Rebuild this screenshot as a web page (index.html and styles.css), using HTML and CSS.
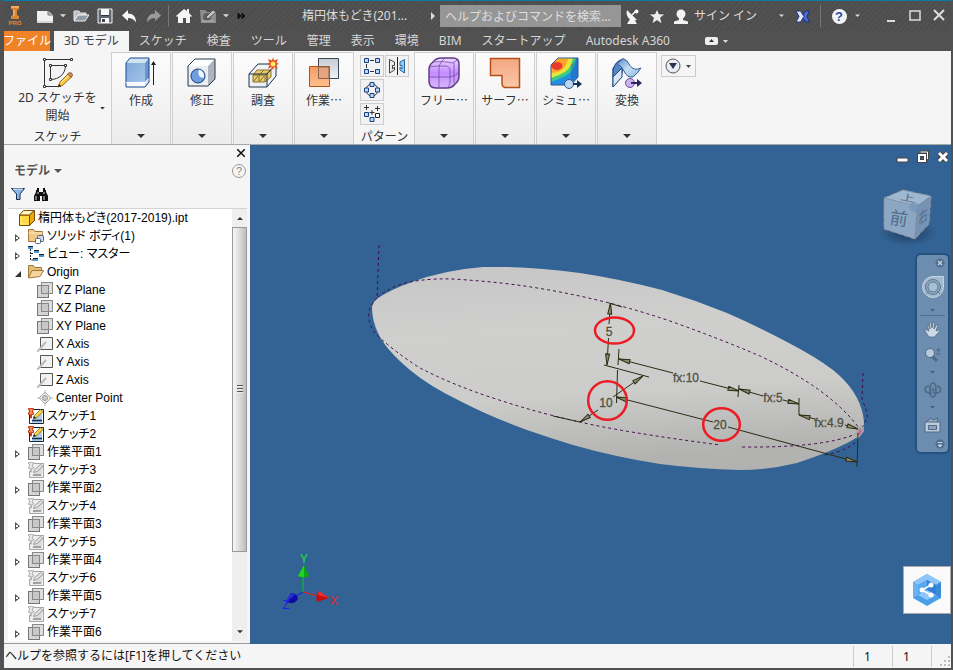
FILE: index.html
```html
<!DOCTYPE html>
<html lang="ja">
<head>
<meta charset="utf-8">
<title>楕円体もどき(2017-2019).ipt</title>
<link rel="stylesheet" href="styles.css">
</head>
<body>
<svg class="defs" aria-hidden="true">
  <defs>
    <linearGradient id="gBlue" x1="0" y1="0" x2="1" y2="1"><stop offset="0" stop-color="#7fa8d8"/><stop offset="1" stop-color="#a9c8ec"/></linearGradient>
    <linearGradient id="gGrey" x1="0" y1="0" x2="0" y2="1"><stop offset="0" stop-color="#c4cad2"/><stop offset="1" stop-color="#f2f4f6"/></linearGradient>
    <linearGradient id="gOrange" x1="0" y1="0" x2="0" y2="1"><stop offset="0" stop-color="#f79a62"/><stop offset="1" stop-color="#ffc08c"/></linearGradient>
    <linearGradient id="gSurface" x1="0" y1="0" x2="0" y2="1"><stop offset="0" stop-color="#f3a780"/><stop offset="1" stop-color="#f9c8a8"/></linearGradient>
    <linearGradient id="gPurple" x1="0" y1="0" x2="0" y2="1"><stop offset="0" stop-color="#ecd8ff"/><stop offset=".5" stop-color="#c48cff"/><stop offset="1" stop-color="#d9b6fb"/></linearGradient>
    <linearGradient id="gRibbon" x1="0" y1="0" x2="1" y2="1"><stop offset="0" stop-color="#5b8bc6"/><stop offset=".5" stop-color="#c5dcf4"/><stop offset="1" stop-color="#8db6e2"/></linearGradient>
    <linearGradient id="gBody" x1="0" y1="0" x2=".16" y2="1"><stop offset="0" stop-color="#c6c6c6"/><stop offset=".35" stop-color="#cfcfce"/><stop offset=".68" stop-color="#cccccb"/><stop offset="1" stop-color="#b2b2b1"/></linearGradient>
    <radialGradient id="gShadow"><stop offset=".4" stop-color="#1e3d60" stop-opacity=".6"/><stop offset="1" stop-color="#1e3d60" stop-opacity="0"/></radialGradient>
  </defs>
  <symbol id="caret" viewBox="0 0 8 5"><path d="M0 0h8L4 4z" fill="currentColor"/></symbol>
  <symbol id="plane" viewBox="0 0 16 16"><rect x="4.500" y=".5" width="11" height="11" fill="#ddd" stroke="#888"/><rect x=".5" y="3.500" width="11" height="12" fill="#d4d4d4" stroke="#777"/><rect x="4.500" y="3.500" width="7" height="8" fill="#c8c8c8" stroke="#888"/></symbol>
  <symbol id="axis" viewBox="0 0 16 16"><path d="M3.500 1.500h12v12h-12z" fill="#f1f1f1" stroke="#555"/><path d="M0 16 9 6" stroke="#bbb" stroke-width="2"/></symbol>
  <symbol id="point" viewBox="0 0 16 16"><path d="M8 2l6 6-6 6-6-6z" fill="#eee" stroke="#aaa"/><circle cx="8" cy="8" r="2.500" fill="#ccc" stroke="#999"/><path d="M8 0v4M8 12v4M0 8h4M12 8h4" stroke="#bbb"/></symbol>
  <symbol id="sk" viewBox="0 0 16 16"><path d="M1.500 1.500h14v14h-14z" fill="#fff" stroke="#15233a"/><path d="M4 12l10-10v13H4z" fill="#acd0f2"/><path d="M4 12.500h10" stroke="#142a4a" stroke-width="1.500"/><path d="M5.500 10.500l1-3 6-6 2.500 2-6 6z" fill="#ffd23b" stroke="#755a10" stroke-width=".7"/><path d="M5 11l1-3 2 2z" fill="#222"/><path d="M.5 .5h5v1.500h-1v2.500h1v2H3.500V10h-1V6.500h-2v-2h1V2h-1z" fill="#f08a5c" stroke="#c93c14"/></symbol>
  <symbol id="skoff" viewBox="0 0 16 16"><path d="M5 1.500h10.500v14h-14V9" fill="#eee" stroke="#a5a5a5"/><path d="M4 14l10-10v10z" fill="#ddd"/><path d="M5.500 10.500l1-3 6-5 2.500 2-6 5z" fill="#ddd" stroke="#a0a0a0"/><path d="M5 13h8" stroke="#a0a0a0" stroke-width="2"/><path d="M.5.5h5v1.500h-1v3h1v1.500H3.500V10h-1V6.500h-2V5h1V2h-1z" fill="#e7e7e7" stroke="#aaa" stroke-width=".8"/></symbol>
  <symbol id="part" viewBox="0 0 16 16"><path d="M.5 5h10v10.500H.5z" fill="#ffd93c" stroke="#7b4a00"/><path d="M.5 5l4-4.500h11L10.500 5z" fill="#fff6c2" stroke="#7b4a00"/><path d="M10.500 5l5-4.500v10l-5 5z" fill="#e9a90e" stroke="#7b4a00"/><path d="M2 6.500v7.500h7" stroke="#fff2a0" fill="none"/></symbol>
  <symbol id="bodies" viewBox="0 0 16 16"><path d="M.5 13.500v-12h5l1.500 2h7.500v10z" fill="#efc987" stroke="#a27838"/><path d="M.5 5h14" stroke="#fbe7be"/><rect x="9.500" y="7.500" width="6" height="6" rx="1" fill="#cfdaeb" stroke="#51627e"/><rect x="7.500" y="10.500" width="5" height="5" rx="1" fill="#fff" stroke="#51627e"/></symbol>
  <symbol id="view" viewBox="0 0 16 16"><path d="M2.500 3v11h3M3 7.500h3M11 9.500h5" stroke="#222" fill="none" stroke-dasharray="2 1"/><path d="M0 0h5v3H0zM6 4h5v3H6zM11 8h5v3h-5zM5 12h5v3H5z" fill="#4d97d8"/><path d="M0 0h5v1H0zM6 4h5v1H6zM11 8h5v1h-5zM5 12h5v1H5z" fill="#123"/></symbol>
  <symbol id="folder" viewBox="0 0 16 16"><path d="M.5 13.500v-12h5l1.500 2h6.500v3" fill="#e5bd7a" stroke="#a27838"/><path d="M.5 14 4 6.500h11.500l-3.500 6z" fill="#f5d79d" stroke="#a27838"/></symbol>
</svg>

<div class="window">
  <header class="titlebar">
    <button class="tool logo" aria-label="Inventor"><svg width="14" height="20" viewBox="0 0 14 20"><path d="M3 0h8v3L9 4v5l2 1v3H3v-3l2-1V4L3 3z" fill="#d88534"/><path d="M3 0h8v2H3zM5 4h2v6H5z" fill="#f5a860"/><text x="7" y="19" text-anchor="middle" class="pro">PRO</text></svg></button>
    <button class="tool" aria-label="新規"><svg width="16" height="13" viewBox="0 0 16 13"><path d="M0 1h11l5 4v8H0z" fill="#f0f1f2"/><path d="M11 1v4h5" fill="#b5bac0" stroke="#777"/><path d="M0 12h16" stroke="#bbb"/></svg></button>
    <button class="tool drop" aria-label="新規のオプション"><svg width="6" height="4"><use href="#caret"/></svg></button>
    <button class="tool" aria-label="開く"><svg width="16" height="13" viewBox="0 0 16 13"><path d="M1 10V1h5l1 2h6v2H5z" fill="#b9c0c7" stroke="#e6e6e6"/><path d="M1 11 5 5h11l-4 6z" fill="#8f9aa4" stroke="#f1f1f1"/></svg></button>
    <button class="tool" aria-label="保存"><svg width="16" height="16" viewBox="0 0 16 16"><path d="M1 1h14v14H1z" fill="#5d6873" stroke="#f4f4f4"/><path d="M4 1h8v6H4zM4 10h8v5H4z" fill="#f7f7f7"/><path d="M4 7.500h8" stroke="#334"/><path d="M5 11h3v3H5z" fill="#445"/></svg></button>
    <button class="tool" aria-label="元に戻す"><svg width="15" height="13" viewBox="0 0 15 13"><path d="M0 5.500 6 0v3.500c5 0 8 3 8 9-2-3-4-4.500-8-4.500v3z" fill="#f5f5f5"/></svg></button>
    <button class="tool" aria-label="やり直し"><svg width="15" height="13" viewBox="0 0 15 13"><path d="M15 5.500 9 0v3.500c-5 0-8 3-8 9 2-3 4-4.500 8-4.500v3z" fill="#9a9a9a"/></svg></button>
    <span class="sep"></span>
    <button class="tool" aria-label="ホーム"><svg width="16" height="16" viewBox="0 0 16 16"><path d="M8 1 0 8l1 1 1-1v7h5v-5h3v5h4V8l1 1 1-1-3-3V1h-2v2z" fill="#f5f5f5"/></svg></button>
    <button class="tool" aria-label="材料"><svg width="16" height="15" viewBox="0 0 16 15"><path d="M0 1h5l2 2h9v11H1z" fill="#8d8d8d"/><circle cx="7" cy="8" r="4" fill="#5d5d5d"/><path d="m6 8 7-7 3 2-8 7z" fill="#c6c6c6" stroke="#555"/><path d="M2 12h12" stroke="#bbb"/></svg></button>
    <button class="tool drop" aria-label="材料のオプション"><svg width="6" height="4"><use href="#caret"/></svg></button>
    <button class="tool more" aria-label="その他"><svg width="9" height="8" viewBox="0 0 9 8"><path d="m1 1 3 3-3 3zM5 1l3 3-3 3z" fill="#111" stroke="#111"/></svg></button>
    <span class="doc-name">楕円体もどき(201...</span>
    <button class="tool expand" aria-label="展開"><svg width="4" height="8" viewBox="0 0 4 8"><path d="M0 0l4 4-4 4z" fill="#ddd"/></svg></button>
    <input class="search" type="text" aria-label="検索" placeholder="ヘルプおよびコマンドを検索...">
    <button class="tool" aria-label="通信センター"><svg width="14" height="15" viewBox="0 0 14 15"><path d="M1 1l10 10C5 13-1 8 1 1z" fill="#f3f3f3"/><path d="m6 6 4-4" stroke="#fff" stroke-width="1.500"/><circle cx="10.500" cy="2.500" r="2" fill="#fff"/><path d="M4 10h4l3 5H1z" fill="#f3f3f3"/></svg></button>
    <button class="tool" aria-label="お気に入り"><svg width="16" height="15" viewBox="0 0 16 15"><path d="m8 0 2.200 5H16l-4.500 3.700L13 15l-5-3.500L3 15l1.500-6.300L0 5h5.800z" fill="#eee" stroke="#333" stroke-width=".6"/></svg></button>
    <button class="tool sign"><svg width="16" height="15" viewBox="0 0 16 15"><circle cx="8" cy="5" r="4.500" fill="#f3f3f3"/><path d="M6 8h4v3l5 1.500V15H1v-2.500L6 11z" fill="#f3f3f3"/></svg><span>サイン イン</span></button>
    <button class="tool drop wide" aria-label="サインインのオプション"><svg width="5" height="4"><use href="#caret"/></svg></button>
    <button class="tool" aria-label="Exchange"><svg width="16" height="13" viewBox="0 0 16 13"><path d="M14.500 1h-4L7 6.500l3.500 5.500h4L12 6.500z" fill="#4b67d8" stroke="#1d2e74"/><path d="M1 1h4.500L9 6.500 5.500 12H1l3-5.500z" fill="#dfe5ff" stroke="#24357e"/></svg></button>
    <span class="sep late"></span>
    <button class="tool help" aria-label="ヘルプ"><span>?</span></button>
    <button class="tool drop" aria-label="ヘルプのオプション"><svg width="5" height="4"><use href="#caret"/></svg></button>
    <div class="win-buttons">
      <button class="tool" aria-label="最小化"><svg width="14" height="14"><path d="M3 12h8" stroke="#ddd" stroke-width="2"/></svg></button>
      <button class="tool" aria-label="最大化"><svg width="14" height="14"><rect x="2" y="2" width="10" height="9" fill="none" stroke="#ddd" stroke-width="1.500"/></svg></button>
      <button class="tool" aria-label="閉じる"><svg width="14" height="14"><path d="m2 1 10 10M12 1 2 11" stroke="#ddd" stroke-width="2"/></svg></button>
    </div>
  </header>

  <nav class="tabs">
    <button class="file">ファイル</button>
    <button class="tab active">3D モデル</button>
    <button class="tab">スケッチ</button>
    <button class="tab">検査</button>
    <button class="tab">ツール</button>
    <button class="tab">管理</button>
    <button class="tab">表示</button>
    <button class="tab">環境</button>
    <button class="tab">BIM</button>
    <button class="tab">スタートアップ</button>
    <button class="tab">Autodesk A360</button>
    <button class="fold" aria-label="リボンを最小化"><svg width="24" height="8" viewBox="0 0 24 8"><rect width="13" height="8" rx="2" fill="#eee"/><path d="M4 5h5L6.500 2z" fill="#333"/><path d="M18 3h5l-2.500 3z" fill="#ddd"/></svg></button>
  </nav>

  <section class="ribbon">
    <div class="panel-sketch">
      <button class="start">
        <svg width="30" height="30" viewBox="0 0 30 30"><path d="M1.500 1.500h27M1.500 1.500v27H18" stroke="#333" fill="none"/><path d="M7.500 7.500h15c0 8-6 14-15 14z" fill="#f1f3f5" stroke="#333"/><path d="M.5.5h2v2h-2zM27.500.5h2v2h-2zM.5 27.500h2v2h-2zM6.500 6.500h2v2h-2zM21.500 6.500h2v2h-2zM6.500 20.500h2v2h-2z" fill="#fff" stroke="#333"/><path d="m15 29 2-5 8-8 3.500 3-9 8.500z" fill="#ffc43d" stroke="#7a5512" stroke-width=".8"/><path d="m18 25 8-8" stroke="#fff0a8"/><path d="m24.500 16 2-1.500q3 0 3 3l-1.500 2z" fill="#d98d6a" stroke="#694b13" stroke-width=".8"/><path d="m15 29 1-3 2 2z" fill="#222"/></svg>
        <span>2D スケッチを<br>開始</span>
        <svg class="side" width="5" height="3"><use href="#caret"/></svg>
      </button>
      <div class="panel-title">スケッチ</div>
    </div>
    <button class="panel"><svg class="big" viewBox="0 0 32 32"><path d="M1 6h19v24H1z" fill="url(#gBlue)"/><path d="M1 6l4-5h19l-4 5z" fill="#cfe4f2"/><path d="M20 6l4-5v24l-4 5z" fill="#6b96c9"/><path d="M1 25h19v5H1z" fill="#f5f7fa"/><path d="m20 25 4-4v4l-4 5z" fill="#d7dfe8"/><path d="M1 6l4-5h19v24l-4 5H1z" fill="none" stroke="#174691"/><path d="M1 25.500h19l4-4" fill="none" stroke="#fff"/><path d="M28.500 28V7" stroke="#222"/><path d="m26 8 2.500-4L31 8z" fill="#222"/></svg><span>作成</span><svg class="down"><use href="#caret"/></svg></button>
    <button class="panel"><svg class="big" viewBox="0 0 32 32"><path d="M2 9h20v20H2z" fill="#eceff1"/><path d="m2 9 7-7h20l-7 7z" fill="#fff"/><path d="m22 9 7-7v20l-7 7z" fill="#aeb4bd"/><path d="m2 9 7-7h20v20l-7 7H2z" fill="none" stroke="#26364e"/><circle cx="12" cy="19" r="7" fill="#6f9fe0" stroke="#173c7c"/><path d="M13 12.500a6.500 6.500 0 0 1 5 8c-4 1-7-3-5-8z" fill="#eef6ff"/></svg><span>修正</span><svg class="down"><use href="#caret"/></svg></button>
    <button class="panel"><svg class="big" viewBox="0 0 32 32"><path d="m2 17 9-10h18v12L20 30H2z" fill="#eef2f5"/><path d="m6 18 4-5h14v7l-6 5H6z" fill="#e3cb6e" stroke="#8a722a"/><path d="M6 18h12v7M18 18l6-5M12 18v7m0-7 5-5M7 24l4-5m2 5 4-5" fill="none" stroke="#8a722a"/><path d="m2 17 9-10h18v12L20 30H2zM2 17h18v13M20 17l9-10" fill="none" stroke="#20324e"/><path d="m26 0 1 3.500L31 2l-1.500 3.500L32 7l-3 1 2 4-4-2-1 3-1.500-3L21 12l1.500-4L20 7l2.500-1.500L21 2l4 1.500z" fill="#e5501c"/><circle cx="26" cy="7" r="2.500" fill="#ffe76b"/></svg><span>調査</span><svg class="down"><use href="#caret"/></svg></button>
    <button class="panel"><svg class="big" viewBox="0 0 32 32"><path d="M10.500 1.500h20v20h-20z" fill="url(#gGrey)" stroke="#3c4654"/><path d="M1.500 9.500h20v20h-20z" fill="url(#gOrange)" stroke="#b54f19"/><path d="M10.500 10h10.500v11.500H10.500z" fill="#e5a47e" stroke="#89664f"/></svg><span>作業…</span><svg class="down"><use href="#caret"/></svg></button>
    <div class="panel-pattern">
      <div class="minis">
        <button class="mini" aria-label="矩形状パターン"><svg width="18" height="18" viewBox="0 0 18 18"><path d="M7 3.500h4M3.500 7v4M7 14.500h4" stroke="#333" fill="none"/><path d="M1.500 1.500h4v4h-4zM12.500 1.500h4v4h-4zM1.500 12.500h4v4h-4zM12.500 12.500h4v4h-4z" fill="#bcd8f7" stroke="#173e8a"/></svg></button>
        <button class="mini" aria-label="ミラー"><svg width="18" height="18" viewBox="0 0 18 18"><path d="M1.500 2.500 6.500 5v3.500h-2V12l2-2v3l-5 3z" fill="#e5eaf0" stroke="#444"/><path d="M9.500 0v18" stroke="#222"/><path d="M16.500 2.500 12 5v3.500h2V12l-2-2v3l4.500 3z" fill="#9ccbf0" stroke="#28669b"/></svg></button>
        <button class="mini" aria-label="円形状パターン"><svg width="18" height="18" viewBox="0 0 18 18"><circle cx="9" cy="9" r="6" fill="none" stroke="#333"/><path d="M7 1.500h4v4H7zM1.500 7h4v4h-4zM12.500 7h4v4h-4zM7 12.500h4v4H7z" fill="#bcd8f7" stroke="#173e8a"/></svg></button>
        <button class="mini" aria-label="スケッチ駆動パターン"><svg width="18" height="18" viewBox="0 0 18 18"><path d="M3.500 0v5M1 2.500h5M14.500 1v5M12 3.500h5M9 5v5M6.500 7.500h5" stroke="#333"/><path d="M1.500 7.500h4v4h-4zM7 12.500h4v4H7z" fill="#bcd8f7" stroke="#173e8a"/><path d="M12.500 8.500h4v4h-4z" fill="#fff" stroke="#222"/></svg></button>
      </div>
      <div class="panel-title">パターン</div>
    </div>
    <button class="panel"><svg class="big" viewBox="0 0 32 32"><path d="M1 12q0-4 4-7 3-4 8-4h12q6 0 6 6v12q0 5-4 8-3 4-8 4H8q-7 0-7-7z" fill="url(#gPurple)" stroke="#5f3a86" stroke-width="1.500"/><path d="M2 10q3-1 9-1h6q5 0 5 5v11q0 3-2 5M11 9v21M2 20h20q6-1 9-5M5 5q12-1 19 1 3-1 5-3M11 9q2-5 6-8M26 6v20" fill="none" stroke="#6b3f99" stroke-opacity=".7"/></svg><span>フリー…</span><svg class="down"><use href="#caret"/></svg></button>
    <button class="panel"><svg class="big" viewBox="0 0 32 32"><path d="M1.500 1.500h29v29H16q-3-1-3-4v-8H1.500z" fill="url(#gSurface)" stroke="#b54f19" stroke-width="1.500"/></svg><span>サーフ…</span><svg class="down"><use href="#caret"/></svg></button>
    <button class="panel"><svg class="big" viewBox="0 0 32 32"><path d="M1 8 8 1h20v19l-8 8H1z" fill="#218fe3"/><path d="M1 8 8 1h18q-1 15-15 20l-10 4z" fill="#3ac987"/><path d="M1 8 8 1h15Q21 14 9 18l-8 3z" fill="#e5e63a"/><path d="M1 9 7 2h11q-2 10-10 13l-7 1z" fill="#ffa32b"/><ellipse cx="7" cy="9" rx="5.500" ry="4" fill="#e83b2b"/><path d="M21 8l7-7v19l-7 8z" fill="#234c9d" opacity=".35"/><path d="M1 8 8 1h20v19l-7 8H1z" fill="none" stroke="#34508a"/><circle cx="19" cy="27" r="4.500" fill="#b8d6ef" stroke="#315787"/><path d="M23 26h4v-3l5 4-5 4v-3h-4z" fill="#17305a"/></svg><span>シミュ…</span><svg class="down"><use href="#caret"/></svg></button>
    <button class="panel"><svg class="big" viewBox="0 0 32 32"><path d="m2 11 5-3 5-6v9l-2 9-8 10z" fill="#e6f1fb" stroke="#20447c"/><path d="M2 13Q4 4 12 2l-1 9-9 9z" fill="#5586c4" stroke="#20447c"/><path d="m2 20 9-9v9L2 30z" fill="#d5e6f6" stroke="#20447c"/><path d="M12 1.500q4 1 7 7 4 6 11 2.500-3 5-8 9-6 1-9-6-2-5-7-7z" fill="url(#gRibbon)" stroke="#365f95"/><circle cx="19" cy="26" r="4.500" fill="#c9b1f2" stroke="#67509b"/><path d="M20 25h6v-3l5 4-5 4v-3h-6z" fill="#302465"/></svg><span>変換</span><svg class="down"><use href="#caret"/></svg></button>
    <button class="extra" aria-label="パネルの表示"><svg width="28" height="16" viewBox="0 0 28 16"><circle cx="8" cy="8" r="7" fill="#e9edf2" stroke="#555"/><path d="M4 5h8l-4 6z" fill="#24324a"/><path d="M21 7h5l-2.500 3z" fill="#444"/></svg></button>
  </section>

  <main class="work">
    <aside class="browser">
      <button class="close" aria-label="ブラウザを閉じる"><svg width="8" height="8" viewBox="0 0 8 8"><path d="m0 0 8 8M8 0 0 8" stroke="#111" stroke-width="1.500"/></svg></button>
      <div class="browser-head">
        <button class="model">モデル<svg width="8" height="5"><use href="#caret"/></svg></button>
        <button class="ask" aria-label="ヘルプ">?</button>
      </div>
      <div class="filters">
        <button aria-label="フィルタ"><svg width="14" height="12" viewBox="0 0 14 12"><path d="M.5.5h13L9 6v5.500H5.500V6z" fill="#8bb7e7" stroke="#152b4c"/><path d="M2 1h10" stroke="#e3f0ff"/></svg></button>
        <button aria-label="検索"><svg width="16" height="13" viewBox="0 0 16 13"><path d="M3 2h3v2h4V2h3v2l2 4v5H9V8H7v5H1V8l2-4z" fill="#111"/><path d="M4 0h2v2H4zM10 0h2v2h-2z" fill="#111"/><path d="M3 8v4M11 8v4M5 4v2M11 4v2" stroke="#ddd"/></svg></button>
      </div>
      <div class="tree-box">
        <ul class="tree">
          <li class="root"><i></i><svg><use href="#part"/></svg>楕円体もどき(2017-2019).ipt</li>
          <li><button aria-label="展開"></button><svg><use href="#bodies"/></svg>ソリッド ボディ(1)</li>
          <li><button aria-label="展開"></button><svg><use href="#view"/></svg>ビュー: マスター</li>
          <li><button class="open" aria-label="折りたたむ"></button><svg><use href="#folder"/></svg>Origin</li>
          <li class="sub"><i></i><svg><use href="#plane"/></svg>YZ Plane</li>
          <li class="sub"><i></i><svg><use href="#plane"/></svg>XZ Plane</li>
          <li class="sub"><i></i><svg><use href="#plane"/></svg>XY Plane</li>
          <li class="sub"><i></i><svg><use href="#axis"/></svg>X Axis</li>
          <li class="sub"><i></i><svg><use href="#axis"/></svg>Y Axis</li>
          <li class="sub"><i></i><svg><use href="#axis"/></svg>Z Axis</li>
          <li class="sub"><i></i><svg><use href="#point"/></svg>Center Point</li>
          <li><i></i><svg><use href="#sk"/></svg>スケッチ1</li>
          <li><i></i><svg><use href="#sk"/></svg>スケッチ2</li>
          <li><button aria-label="展開"></button><svg><use href="#plane"/></svg>作業平面1</li>
          <li><i></i><svg><use href="#skoff"/></svg>スケッチ3</li>
          <li><button aria-label="展開"></button><svg><use href="#plane"/></svg>作業平面2</li>
          <li><i></i><svg><use href="#skoff"/></svg>スケッチ4</li>
          <li><button aria-label="展開"></button><svg><use href="#plane"/></svg>作業平面3</li>
          <li><i></i><svg><use href="#skoff"/></svg>スケッチ5</li>
          <li><button aria-label="展開"></button><svg><use href="#plane"/></svg>作業平面4</li>
          <li><i></i><svg><use href="#skoff"/></svg>スケッチ6</li>
          <li><button aria-label="展開"></button><svg><use href="#plane"/></svg>作業平面5</li>
          <li><i></i><svg><use href="#skoff"/></svg>スケッチ7</li>
          <li><button aria-label="展開"></button><svg><use href="#plane"/></svg>作業平面6</li>
        </ul>
        <div class="scroll">
          <button class="arrow" aria-label="上へ"><svg class="flip" width="6" height="4"><use href="#caret"/></svg></button>
          <div class="thumb"><span></span></div>
          <div class="rest"></div>
          <button class="arrow" aria-label="下へ"><svg width="6" height="4"><use href="#caret"/></svg></button>
        </div>
      </div>
    </aside>

    <section class="canvas">
      <svg class="scene" viewBox="250 145 701 499" preserveAspectRatio="xMidYMid meet">
        <defs>
          <marker id="arr" viewBox="0 0 12 6" refX="12" refY="3" markerWidth="12" markerHeight="6" orient="auto-start-reverse" markerUnits="userSpaceOnUse"><path d="M1 1 12 3 1 5z" fill="#8b8b70" stroke="#2c2c10"/></marker>
        </defs>
        <path fill="url(#gBody)" d="M372 308Q372 303 378 298Q392 289 412 282Q444 270 483 267Q528 266 580 273Q620 279 662 290Q695 300 727 313Q757 326 787 342Q816 357 833 370Q858 390 863 415Q865 425 863 432Q858 438 843 445Q827 453 797 463Q768 470 740 470Q700 469 660 464Q615 457 573 445Q550 438 527 430Q491 417 460 401Q429 386 410 370Q385 349 378 333Q372 320 372 308Z"/>
        <g class="curve">
          <path d="M379 245 377 298Q390 286 410 282Q436 277 467 280Q513 283 560 292Q617 303 670 321Q718 338 760 356Q830 389 859 428"/>
          <path d="M377 298Q367 308 369 320Q371 330 380 338Q398 354 420 368Q453 385 493 398Q538 413 580 422Q622 432 720 445M742 447Q825 448 858 433M863 373 862 400Q868 412 867 418L861 430M825 455Q847 451 858 440"/>
        </g>
        <path d="M854 436l3-8 5-3 2 6-6 8z" fill="#aaa"/><path d="M857 434l3-6 2 3-2 4z" fill="#c66aa0"/>
        <g class="dim">
          <path marker-start="url(#arr)" d="M610.500 303 609 324"/><path marker-end="url(#arr)" d="M608.500 338 607 365"/>
          <path d="M609 303 622 307M604 365 649 377M619 349 618 365M617.500 370 616.500 403M553 416 580 422M739 385 738 397M799 398V415M858 433 857 467"/>
          <path marker-start="url(#arr)" d="M643 376 613 397"/><path marker-end="url(#arr)" d="M598 410 580 422"/>
          <path marker-start="url(#arr)" d="M619 359 673 373"/><path marker-end="url(#arr)" d="M700 381 739 391"/>
          <path marker-start="url(#arr)" d="M739 389 763 396"/><path marker-end="url(#arr)" d="M783 400 799 404"/>
          <path marker-start="url(#arr)" d="M799 415 815 419"/><path marker-end="url(#arr)" d="M845 425 858 429"/>
          <path marker-start="url(#arr)" d="M616 397 713 422"/><path marker-end="url(#arr)" d="M728 427 857 462"/>
        </g>
        <g class="value">
          <text x="609" y="336">5</text><text x="606" y="407">10</text><text x="720" y="429">20</text>
          <text x="686" y="382">fx:10</text><text x="773" y="402">fx:5</text><text x="829" y="427">fx:4.9</text>
        </g>
        <g fill="none" stroke="#ed1c24" stroke-width="2.500"><ellipse cx="614.500" cy="330.500" rx="19.500" ry="13"/><circle cx="607.500" cy="400.500" r="19.300"/><ellipse cx="721.500" cy="424.500" rx="18.300" ry="16.300"/></g>
        <path d="M303 592V575" stroke="#00d21e"/><path d="M304 565 309 576q-5 3-11 0z" fill="#0aa80f"/><path d="M304 565v12q-4 0-6-1z" fill="#20d42a"/>
        <path d="M303 592 318 596" stroke="#f11"/><path d="M329 598 317 602q-2-6 2-11z" fill="#c80d0d"/><path d="M329 598 318 595l1-4z" fill="#f03030"/>
        <path d="M303 592 286 602" stroke="#1616d8"/><path d="M286 602 291 593q6 0 7 6-3 5-8 4z" fill="#0d0da6"/><path d="M286 602 291 593l4 2z" fill="#2929dc"/>
        <g class="axis-label"><text x="304" y="563" fill="#1de32f">Y</text><text x="334" y="605" fill="#e81d25">X</text><text x="286" y="609" fill="#2222e0">Z</text></g>
      </svg>

      <div class="doc-buttons">
        <button aria-label="最小化"><svg width="14" height="14"><rect x="1" y="8" width="11" height="4" fill="#fff" stroke="#444"/></svg></button>
        <button aria-label="元に戻す"><svg width="14" height="14"><path d="M4.500 2h7v7" fill="none" stroke="#444" stroke-width="3"/><path d="M3 5h6v6H3z" fill="none" stroke="#444" stroke-width="4"/><path d="M4.500 2h7v7" fill="none" stroke="#fff"/><path d="M3 5h6v6H3z" fill="none" stroke="#fff" stroke-width="2"/></svg></button>
        <button aria-label="閉じる"><svg width="14" height="14"><path d="m3 3 8 8m0-8-8 8" stroke="#444" stroke-width="5"/><path d="m3 3 8 8m0-8-8 8" stroke="#fff" stroke-width="3"/></svg></button>
      </div>

      <button class="cube" aria-label="ビューキューブ">
        <svg width="60" height="62" viewBox="0 0 60 62"><ellipse cx="31" cy="47" rx="29" ry="13" fill="url(#gShadow)"/><path d="m7 12 19-8 28 6-14 10z" fill="#9fb8d2"/><path d="m7 12 33 8-2 33L7 43z" fill="#8ba7c4"/><path d="M54 10 40 20l-2 33 14-15z" fill="#7592b2"/><path d="m7 12 19-8 28 6-2 28-14 15L7 43zM7 12l33 8 14-10M40 20l-2 33" fill="none" stroke="#8e9299" stroke-dasharray="5 2"/><circle cx="37" cy="21" r="5" fill="#7595bb" opacity=".7"/><text class="front" x="22" y="39" transform="rotate(8 22 32)">前</text><text class="face" x="0" y="0" transform="translate(30 15) rotate(12) scale(1 .6)">上</text><text class="face" x="0" y="0" transform="translate(46 36) skewY(-38) scale(.6 1)">右</text></svg>
      </button>

      <div class="navbar">
        <button class="n-small" aria-label="閉じる"><svg width="10" height="10" viewBox="0 0 10 10"><circle cx="5" cy="5" r="4.500" fill="#506e8e"/><path d="m3 3 4 4m0-4-4 4" stroke="#c1d2e2" stroke-width="1.500"/></svg></button>
        <button class="n-wheel" aria-label="ホイール"><svg width="24" height="24" viewBox="0 0 24 24"><path d="M12 1.500h10.500v11a10.500 10.500 0 1 1-10.500-11z" fill="#a4bbcf" stroke="#c3d2df"/><circle cx="12" cy="12" r="7.500" fill="#8ea9c2" stroke="#5d7793"/><circle cx="12" cy="12" r="5" fill="#a9bfd1" stroke="#5d7793"/><path d="m8 16-3 3m11-3 3 3" stroke="#5d7793"/></svg></button>
        <button class="n-drop" aria-label="ホイールのオプション"><svg width="5" height="3"><use href="#caret"/></svg></button>
        <hr>
        <button class="n-item" aria-label="画面移動"><svg width="17" height="17" viewBox="0 0 17 17"><path d="M5 16 1 10V8l4 2-2-6 1-1 2 5-.5-6L7 1l1 6 1-6 1.500.5L10 8l3-5 1 1-2 6 3-1 1 1-4 4-1 2z" fill="#ccd8e2" stroke="#566e86" stroke-width=".8"/></svg></button>
        <button class="n-item" aria-label="ズーム"><svg width="18" height="16" viewBox="0 0 18 16"><path d="m8 9 5 5" stroke="#4d6986" stroke-width="3"/><circle cx="6" cy="6" r="4.500" fill="#b5cada" stroke="#4d6986"/><path d="M12 3h5M14.500.5v5M12 7h5" stroke="#4d6986"/></svg></button>
        <button class="n-drop" aria-label="ズームのオプション"><svg width="5" height="3"><use href="#caret"/></svg></button>
        <button class="n-item" aria-label="オービット"><svg width="18" height="16" viewBox="0 0 18 16"><path d="M9 1c4 0 4 14 0 14S5 1 9 1zM5 4C-1 5 0 11 6 11m6 0c6 0 6-6 1-7" fill="none" stroke="#4d6986" stroke-width="1.500"/><path d="M9 5v6M6 8h6" stroke="#4d6986"/><path d="m5 9 3 2-3 2zM12 9l-3 2 3 2z" fill="#4d6986"/></svg></button>
        <button class="n-drop" aria-label="オービットのオプション"><svg width="5" height="3"><use href="#caret"/></svg></button>
        <button class="n-item" aria-label="ビュー正面"><svg width="17" height="17" viewBox="0 0 17 17"><path d="m2 5 5-4 2 2 5-2-1 4" fill="#91abc3" stroke="#4d6986"/><path d="M1 5h15v10H1z" fill="#bccbd8" stroke="#526b84"/><path d="M4.500 8.500h8v4h-8z" fill="#8aa4bd" stroke="#526b84"/></svg></button>
        <button class="n-small" aria-label="カスタマイズ"><svg width="10" height="10" viewBox="0 0 10 10"><circle cx="5" cy="5" r="4.500" fill="#506e8e"/><path d="M2.500 3.500h5M3 6h4L5 8z" stroke="#c1d2e2" fill="#c1d2e2"/></svg></button>
      </div>

      <button class="share" aria-label="共有"><svg width="28" height="32" viewBox="0 0 28 32"><path d="m14 0 14 8v16l-14 8L0 24V8z" fill="#4b9fe9"/><path d="m14 0 14 8-5 3-9-5-9 5-5-3z" fill="#8fc6f7"/><path d="M0 8l5 3v10l-5 3z" fill="#69b3f5"/><path d="m28 8-5 3v10l5 3z" fill="#388bd6"/><path d="m5 11 9-5v10l-9 5z" fill="#56a8ef"/><path d="m23 11-9-5v10l9 5z" fill="#2f80d5"/><path d="m5 21 9-5 9 5-9 5z" fill="#8fc6f7"/><path d="m18 11-9 5 9 5" stroke="#fff" stroke-width="1.500" fill="none"/><circle cx="18" cy="11" r="2.500" fill="#fff"/><circle cx="9" cy="16" r="2.500" fill="#fff"/><circle cx="18" cy="21" r="2.500" fill="#fff"/></svg></button>
    </section>
  </main>

  <footer class="status">
    <span class="message">ヘルプを参照するには[F1]を押してください</span>
    <span class="count">1</span>
    <span class="count">1</span>
    <span class="grip"><svg width="10" height="10" viewBox="0 0 10 10"><path d="M8 0h2v2H8zM8 4h2v2H8zM8 8h2v2H8zM4 4h2v2H4zM4 8h2v2H4zM0 8h2v2H0z" fill="#bbb"/></svg></span>
  </footer>
</div>
</body>
</html>
```

FILE: styles.css
```css
* { box-sizing: border-box; }

body {
  margin: 0;
  font: 12px/18px "Noto Sans", "Noto Sans CJK JP", sans-serif;
  color: #333;
}

button {
  border: 0;
  padding: 0;
  margin: 0;
  background: none;
  font: inherit;
  color: inherit;
  white-space: nowrap;
}

svg { display: block; flex: none; }

.defs { position: absolute; width: 0; height: 0; }

.window {
  display: grid;
  grid-template-columns: minmax(0, 1fr);
  grid-template-rows: 30px 20px 94px minmax(0, 1fr) 24px;
  height: 100vh;
  background: #515151;
  border: solid #515151;
  border-width: 1px 2px 2px 4px;
  border-top-color: #0a7ba6;
}

/* Title bar */
.titlebar {
  display: flex;
  align-items: center;
  color: #dcdcdc;
  background: repeating-linear-gradient(135deg, #515151 0 3px, #4b4b4b 3px 4px);
}

.tool {
  display: flex;
  align-items: center;
  justify-content: center;
  width: 24px;
  height: 24px;
  flex: none;
}

.logo { width: 29px; padding-right: 7px; }
.pro { font: bold 6px "Liberation Sans", sans-serif; fill: #e08a34; }
.drop { width: 12px; }
.drop.wide { width: 20px; margin-left: 14px; }
.more { width: 18px; }
.sep { width: 1px; height: 22px; margin: 0 3px; background: #777; flex: none; }
.sep.late { margin: 0 6px 0 5px; }
.doc-name { width: 124px; margin-left: 52px; flex: none; white-space: nowrap; }
.expand { width: 14px; }

.search {
  flex: 1;
  width: 0;
  min-width: 80px;
  height: 22px;
  border: 0;
  padding: 0 5px;
  background: #969696;
  font: inherit;
}
.search::placeholder { color: #dedede; opacity: 1; }

.sign { width: auto; gap: 5px; padding-left: 4px; }

.help span {
  width: 15px;
  height: 15px;
  border-radius: 50%;
  background: #f5f5f5;
  color: #2748a8;
  font: bold 13px/15px "Liberation Sans", sans-serif;
}

.win-buttons { display: flex; margin-left: 16px; }

/* Ribbon tabs */
.tabs { display: flex; align-items: stretch; color: #d6d6d6; line-height: 20px; }

.file {
  display: flex;
  justify-content: center;
  width: 46px;
  margin: 0 4px 0 0;
  background: #f08228;
  color: #fff;
}

.tab { padding: 0 10px; }
.tab.active { background: #f5f5f5; color: #444; }
.fold { display: flex; align-items: center; padding-left: 25px; }

/* Ribbon panels */
.ribbon {
  display: flex;
  align-items: stretch;
  background: #f5f5f5;
  padding-top: 1px;
  border-bottom: 1px solid #a8a8a8;
}

.panel-sketch { display: flex; flex-direction: column; width: 107px; }

.start {
  position: relative;
  display: flex;
  flex-direction: column;
  align-items: center;
  flex: 1;
  gap: 1px;
  padding-top: 6px;
}
.side { position: absolute; right: 6px; top: 55px; }
.panel-title { line-height: 15px; text-align: center; }

.panel {
  display: flex;
  flex-direction: column;
  align-items: center;
  width: 60px;
  margin-right: 1px;
  padding: 4px 0 5px;
  border: 1px solid #cfcfcf;
  border-bottom: 0;
  background: linear-gradient(#fcfcfc, #ececec);
  font-family: "Noto Sans CJK JP", sans-serif;
}
.big { width: 32px; height: 32px; margin-bottom: 2px; }
.down { width: 8px; height: 5px; margin-top: auto; }

.panel-pattern { display: flex; flex-direction: column; justify-content: space-between; width: 59px; }
.minis { display: grid; grid-template-columns: 24px 24px; gap: 1px; padding: 3px 0 0 5px; }
.mini {
  display: flex;
  align-items: center;
  justify-content: center;
  height: 22px;
  border: 1px solid #ccc;
  background: #f2f2f2;
}
.mini:nth-child(3), .mini:nth-child(4) { grid-column: 1; margin-top: 1px; }

.extra {
  display: flex;
  align-items: center;
  justify-content: center;
  width: 35px;
  height: 22px;
  margin: 3px 0 0 3px;
  border: 1px solid #ccc;
}

/* Model browser */
.work { display: grid; grid-template-columns: 246px minmax(0, 1fr); min-height: 0; }

.browser {
  position: relative;
  display: flex;
  flex-direction: column;
  min-height: 0;
  padding: 1px 3px 2px 4px;
  background: #f5f5f5;
  border-bottom: 1px solid #999;
}

.close { position: absolute; right: 5px; top: 4px; }

.browser-head {
  display: flex;
  align-items: center;
  justify-content: space-between;
  padding: 16px 1px 0 6px;
}
.model { display: flex; align-items: center; gap: 4px; font-weight: bold; color: #555; }
.ask {
  width: 14px;
  height: 14px;
  border: 1px solid #999;
  border-radius: 50%;
  color: #888;
  font: 11px/12px "Liberation Sans", sans-serif;
}
.filters { display: flex; align-items: center; gap: 8px; height: 28px; padding-left: 3px; }

.tree-box {
  display: flex;
  flex: 1;
  min-height: 0;
  background: #fff;
  border-top: 1px solid #d4d4d4;
}

.tree {
  flex: 1;
  overflow: hidden;
  margin: 0;
  padding: 0;
  list-style: none;
  color: #000;
  font: 12px/18px "Liberation Sans", "Noto Sans CJK JP", sans-serif;
  font-feature-settings: "palt";
}
.tree li { display: flex; align-items: center; height: 18px; white-space: pre; }
.tree svg { width: 16px; height: 16px; margin-right: 3px; }
.tree i, .tree button { width: 20px; height: 18px; flex: none; }
.tree .root i { width: 11px; }
.tree .sub i { width: 29px; }

.tree button { display: flex; align-items: center; padding: 4px 0 0 7px; }
.tree button::before {
  content: "";
  width: 5px;
  height: 8px;
  background: linear-gradient(#fff, #fff) 1px 3px / 2px 2px no-repeat #555;
  clip-path: polygon(0 0, 100% 50%, 0 100%);
}
.tree button.open::before { width: 6px; height: 6px; background: #333; clip-path: polygon(100% 0, 100% 100%, 0 100%); }

.scroll { display: flex; flex-direction: column; width: 15px; background: #efefef; }
.arrow { display: flex; align-items: center; justify-content: center; height: 18px; }
.flip { transform: rotate(180deg); }
.thumb {
  display: flex;
  align-items: center;
  justify-content: center;
  flex: 325;
  border: 1px solid #999;
  background: linear-gradient(90deg, #f7f7f7, #dcdcdc 50%, #bcbcbc);
}
.thumb span { width: 6px; height: 8px; background: repeating-linear-gradient(#555 0 1px, #eee 1px 2px, transparent 2px 3px); }
.rest { flex: 72; }

/* Modelling view */
.canvas { position: relative; background: #336394; min-height: 0; }
.scene { width: 100%; height: 100%; }
.curve { fill: none; stroke: #430b48; stroke-dasharray: 3 3; }
.dim { fill: none; stroke: #2c2c14; }
.value { font: 12px "Liberation Sans", sans-serif; text-anchor: middle; fill: #50503e; stroke: #50503e; stroke-width: 0.3px; }
.axis-label { font: 12px "Liberation Sans", sans-serif; text-anchor: middle; }

.doc-buttons { position: absolute; right: 1px; top: 5px; display: flex; gap: 6px; }

.cube { position: absolute; right: 14px; top: 41px; }
.front, .face { text-anchor: middle; fill: #526d8b; font-family: "Noto Sans CJK JP", sans-serif; }
.front { font-size: 18px; }
.face { font-size: 15px; }

.navbar {
  position: absolute;
  right: 1px;
  top: 108px;
  display: flex;
  flex-direction: column;
  align-items: center;
  width: 35px;
  padding: 2px 3px 3px;
  border: 2px solid #25517f;
  border-radius: 6px;
  background: #6c8db0;
  color: #3f5d7c;
}
.navbar button { display: flex; align-items: center; justify-content: center; }
.navbar hr { width: 100%; height: 1px; margin: 0; border: 0; background: #4e7094; }
.navbar .n-small { align-self: flex-end; height: 11px; }
.n-wheel { height: 38px; }
.n-drop { height: 9px; }
.n-item { height: 26px; }

.share {
  position: absolute;
  right: 0;
  bottom: 30px;
  display: flex;
  align-items: center;
  justify-content: center;
  width: 48px;
  height: 48px;
  border: 1px solid #aaa;
  background: #fafafa;
}

/* Status bar */
.status { display: flex; align-items: center; background: #f5f5f5; color: #111; }
.message { flex: 1; padding-left: 1px; }
.count { width: 39px; height: 21px; padding-left: 10px; line-height: 21px; border-left: 1px solid #ccc; }
.grip { display: flex; align-items: flex-end; justify-content: flex-end; width: 20px; height: 21px; padding: 1px; border-left: 1px solid #ccc; }
```
